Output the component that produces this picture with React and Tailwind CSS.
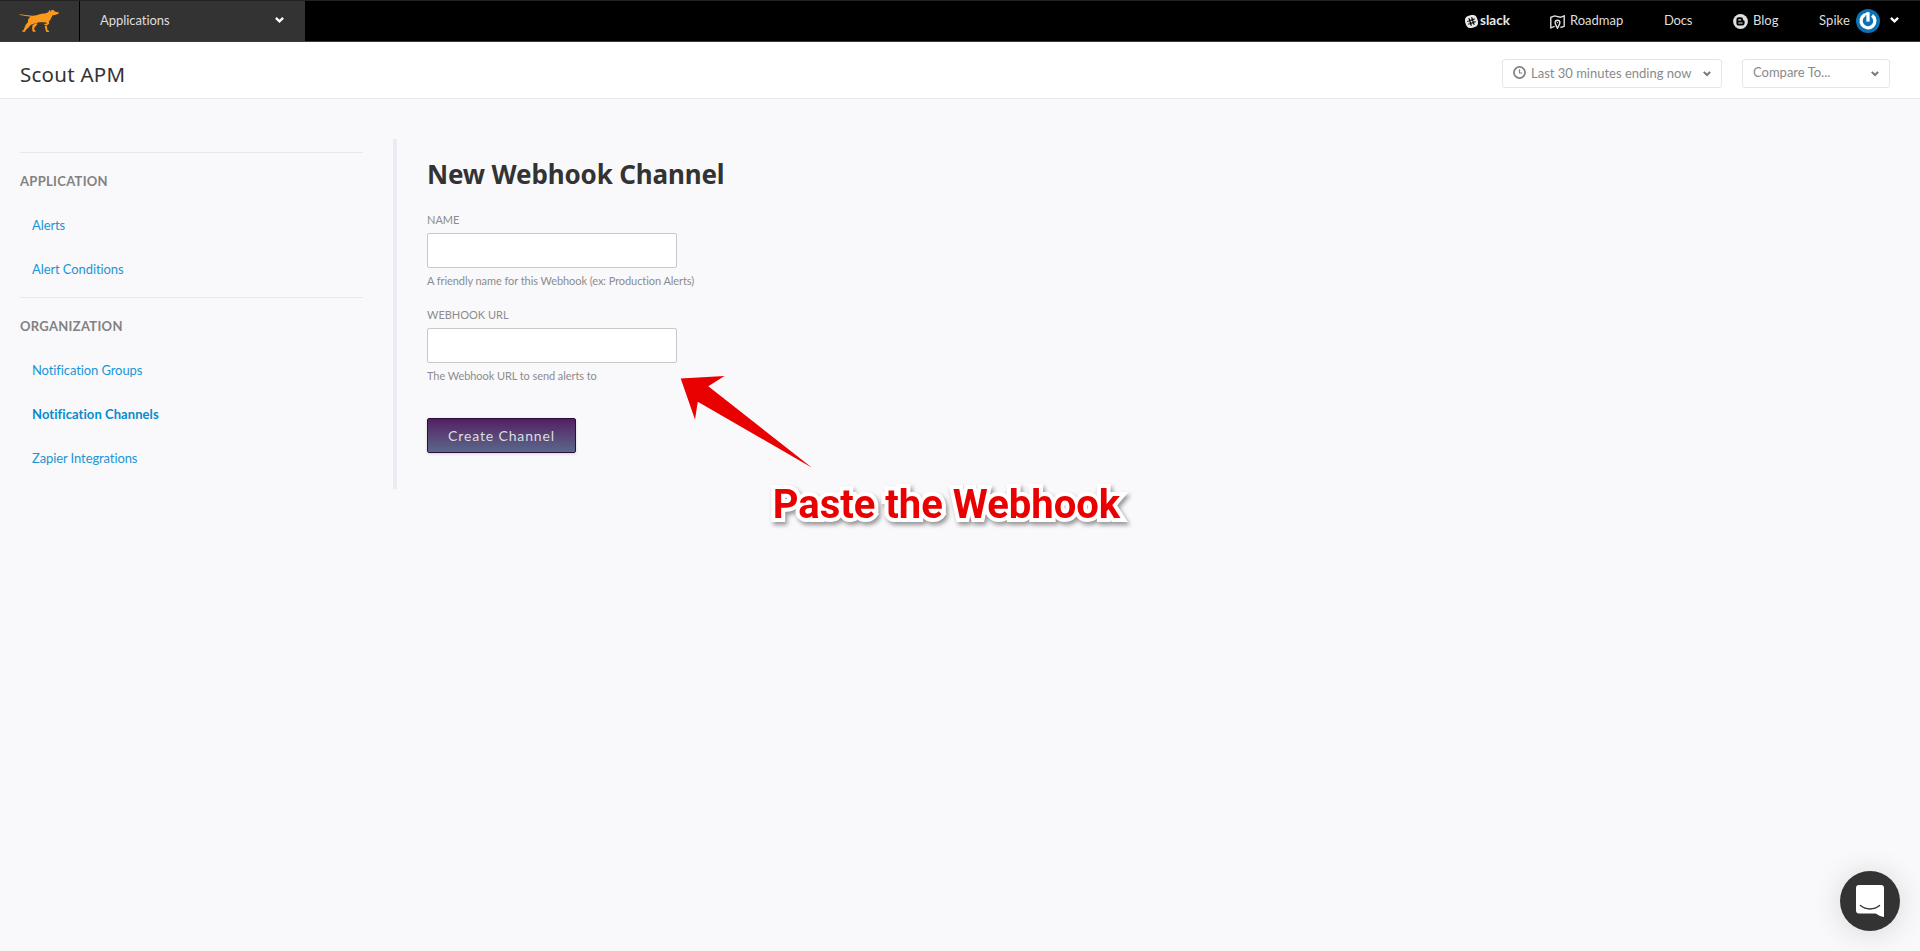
function Chevron({ className }) {
  return (
    <svg viewBox="0 0 9 6" className={className} fill="none" stroke="currentColor" strokeWidth="2.3">
      <path d="M0.9 0.9 L4.5 4.4 L8.1 0.9" />
    </svg>
  );
}

function DogLogo() {
  return (
    <svg viewBox="0 0 120 72" className="h-6 w-10" fill="#f8981d">
      <path d="M2 16 L40 20.5 C52 20 58 16.5 68 14.5 C78 13.5 84 12 88 9 L92 2.5 L95 8 L98 2 L104 4 L109 8.500 L119 9.500 L118.500 14.500 L108 18 L101 19 C98 25 95 33 89 38 L91 41 L90 44 L83 50 L76 47.500 L75.500 44.500 L82 44 L84 42 L78 40 C68 39 56 39 49 43 L36 47.500 L27 57 L20.500 63 L18 68.500 L9.500 68.500 L10 65 L14 62 L20 47 L27 39 C26 32 29 27 35 23.500 L2 18 Z" />
      <path d="M41 48 L53 42 L55 46 L46 56 L46 63 L50 65.500 L49.500 68.500 L42 68.500 L40 65 L39.500 55 Z" />
      <path d="M77 51 L84 51.500 L85 63 L90 66 L90 69 L82.500 69 L80.500 65 Z" />
    </svg>
  );
}

function SlackIcon() {
  return (
    <svg viewBox="0 0 24 24" className="h-[13px] w-[13px]">
      <rect x="0.500" y="0.500" width="23" height="23" rx="8.500" fill="#e8e8e8" transform="rotate(-18 12 12)" />
      <g transform="rotate(-18 12 12)" stroke="#000" strokeWidth="2.200" strokeLinecap="round">
        <path d="M9.300 5.500V18.500M14.700 5.500V18.500M5.500 9.300H18.500M5.500 14.700H18.500" />
      </g>
    </svg>
  );
}

function MapIcon() {
  return (
    <svg viewBox="0 0 15 14" className="h-[14px] w-[15px]" fill="none" stroke="#e0e0e0" strokeWidth="1.400">
      <path d="M4.600 11.300 L0.800 12.800 V2.300 L4.600 0.900 L10.300 2.300 L14.200 0.900 V11.300 L10.400 12.500" />
      <path d="M7.500 13.200 C6.600 11.200 5.100 9.400 5.100 7.600 A2.400 2.400 0 0 1 9.900 7.600 C9.900 9.400 8.400 11.200 7.500 13.200 Z" />
      <circle cx="7.500" cy="7.600" r="0.700" fill="#e0e0e0" stroke="none" />
    </svg>
  );
}

function BlogIcon() {
  return (
    <svg viewBox="0 0 15 15" className="h-[15px] w-[15px]">
      <circle cx="7.500" cy="7.500" r="7.400" fill="#e0e0e0" />
      <path
        d="M5.600 3.300 H7.900 A2.200 2.200 0 0 1 10.100 5.500 V5.900 C10.200 6.500 11.600 6.200 11.600 7.200 V9.300 A2.300 2.300 0 0 1 9.300 11.600 H5.600 A2.200 2.200 0 0 1 3.400 9.400 V5.500 A2.200 2.200 0 0 1 5.600 3.300 Z"
        fill="#000"
      />
      <path d="M5.700 5.900 H7.700 M5.700 9 H9.200" stroke="#e0e0e0" strokeWidth="1.100" strokeLinecap="round" />
    </svg>
  );
}

function Avatar() {
  return (
    <svg viewBox="0 0 24 24" className="h-6 w-6">
      <circle cx="12" cy="12" r="12" fill="#0a73b5" />
      <path d="M8.600 5.900 A6.900 6.900 0 1 0 16.100 6.400" fill="none" stroke="#fff" strokeWidth="3.300" />
      <path d="M7.600 4.800 L12 3.200 V5.600 L8.500 7 Z" fill="#fff" />
      <path d="M12 3.200 V12.600" stroke="#fff" strokeWidth="3.300" />
    </svg>
  );
}

function ClockIcon() {
  return (
    <svg viewBox="0 0 13 13" className="h-[13px] w-[13px]" fill="none" stroke="#828282">
      <circle cx="6.500" cy="6.500" r="5.600" strokeWidth="1.700" />
      <path d="M6.500 3.200 V7 H9.200" strokeWidth="1.200" />
    </svg>
  );
}

function TopBar() {
  return (
    <header className="flex h-[42px] border-t border-b border-t-[#222222] border-b-[#3a3a3a] bg-black text-[13px] leading-[39px] text-[#dedede]">
      <div className="flex w-[79px] bg-[#333333] pt-2 pl-[19px]">
        <DogLogo />
      </div>
      <div className="ml-px flex w-[225px] items-start justify-between bg-[#333333] pr-[21px] pl-5">
        <span className="tracking-[-0.05px]">Applications</span>
        <Chevron className="mt-4 h-[6px] w-[9px] text-white" />
      </div>
      <nav className="ml-auto flex items-start pr-[21px]">
        <a className="flex w-[85px] items-start">
          <span className="mt-[14px] mr-[2px]">
            <SlackIcon />
          </span>
          <span className="text-[13.500px] font-bold text-[#e8e8e8]">slack</span>
        </a>
        <a className="flex w-[114px] items-start">
          <span className="mt-[14px] mr-[5px]">
            <MapIcon />
          </span>
          Roadmap
        </a>
        <a className="w-[69px] tracking-[-0.200px]">Docs</a>
        <a className="flex w-[86px] items-start">
          <span className="mt-[13px] mr-[5px]">
            <BlogIcon />
          </span>
          Blog
        </a>
        <a className="flex items-start">
          <span className="w-[37px] tracking-[0.100px]">Spike</span>
          <span className="mt-2">
            <Avatar />
          </span>
          <Chevron className="mt-4 ml-[10px] h-[6px] w-[9px] text-white" />
        </a>
      </nav>
    </header>
  );
}

function TitleBar() {
  return (
    <div className="flex h-[57px] items-start justify-between border-b border-[#e9e9f1] bg-white pr-[30px] pl-5">
      <h1 className="pt-[15px] font-['Noto_Sans'] text-[20.500px] leading-[34px] tracking-[0.250px] text-[#333333]">
        Scout APM
      </h1>
      <div className="flex gap-5 pt-[17px] text-[13px] text-[#8a8a8a]">
        <button className="flex h-[29px] w-[220px] items-center rounded-[3px] border border-[#e5e5e5] pl-[10px]">
          <span className="mb-[2px]">
            <ClockIcon />
          </span>
          <span className="ml-[5px] w-[172px] text-left leading-[27px]">Last 30 minutes ending now</span>
          <Chevron className="mt-px h-[5.500px] w-2 text-[#777777]" />
        </button>
        <button className="flex h-[29px] w-[148px] items-center justify-between rounded-[3px] border border-[#e5e5e5] pr-[10px] pl-[10px]">
          <span className="mb-[2px]">Compare To...</span>
          <Chevron className="mt-px h-[5.500px] w-2 text-[#777777]" />
        </button>
      </div>
    </div>
  );
}

function SideGroup({ title, items, active }) {
  return (
    <section className="border-t border-[#e9e9e9] pt-[6px] text-[13px] leading-[44px]">
      <h3 className="font-bold tracking-[0.300px] text-[#828282]">{title}</h3>
      <ul className="pl-3 text-[#1a95d5]">
        {items.map((item) => (
          <li key={item} className={item === active ? "font-bold tracking-[0.070px] text-[#088bcd]" : "tracking-[-0.100px]"}>
            {item}
          </li>
        ))}
      </ul>
    </section>
  );
}

function Sidebar() {
  return (
    <aside className="flex w-[343px] flex-col gap-[6px] pt-[13px]">
      <SideGroup title="APPLICATION" items={["Alerts", "Alert Conditions"]} />
      <SideGroup
        title="ORGANIZATION"
        items={["Notification Groups", "Notification Channels", "Zapier Integrations"]}
        active="Notification Channels"
      />
    </aside>
  );
}

function Field({ label, hint }) {
  return (
    <div className="h-[95px] text-[11px] leading-4 text-[#8c8c8c]">
      <label className="block">{label}</label>
      <input className="mt-[5px] block h-[35px] w-[250px] rounded-[2px] border border-[#c8c8c8] bg-white px-2" />
      <p className="mt-[5px] whitespace-nowrap tracking-[-0.070px]">{hint}</p>
    </div>
  );
}

function Callout() {
  return (
    <div className="pointer-events-none absolute top-[376px] left-[680px]">
      <svg viewBox="0 0 132 92" className="h-[92px] w-[132px]">
        <polygon points="0.700,2.500 44.500,0 28.300,10.200 132,91.700 17.800,25.700 15,43.500" fill="#e90000" />
      </svg>
      <svg viewBox="0 0 370 60" className="mt-[6px] ml-[84px] h-[60px] w-[370px] overflow-visible drop-shadow-[2px_3px_2px_rgba(0,0,0,0.4)]">
        <text
          x="8.700"
          y="44"
          className="fill-[#e90000] stroke-white stroke-[8px] font-['Roboto'] text-[40px] font-bold [paint-order:stroke]"
          strokeLinejoin="miter"
          strokeMiterlimit="3"
        >
          Paste the Webhook
        </text>
      </svg>
    </div>
  );
}

function ChatLauncher() {
  return (
    <div className="absolute top-[871px] left-[1840px] flex h-[60px] w-[60px] items-center justify-center rounded-full bg-[#333333] shadow-[0_2px_30px_rgba(0,0,0,0.14)]">
      <svg viewBox="0 0 28 32" className="h-8 w-7">
        <path d="M3 0 H25 A3 3 0 0 1 28 3 V32 C25 31.500 22 30 19.500 28.500 H3 A3 3 0 0 1 0 25.500 V3 A3 3 0 0 1 3 0 Z" fill="#fff" />
        <path d="M4.500 20.500 C10 25 18 25 23.500 20.500" fill="none" stroke="#333333" strokeWidth="1.500" strokeLinecap="round" />
      </svg>
    </div>
  );
}

export default function App() {
  return (
    <div className="relative h-[951px] w-[1920px] overflow-hidden bg-[#f9f9fb] font-['Lato',sans-serif]">
      <TopBar />
      <TitleBar />
      <div className="flex pt-10 pl-5">
        <Sidebar />
        <main className="ml-[30px] h-[350px] border-l-4 border-[#ebebf3] pl-[30px]">
          <h2 className="pt-[17px] pb-5 font-['Noto_Sans'] text-[26px] leading-[36px] font-bold tracking-[-0.150px] text-[#333333]">
            New Webhook Channel
          </h2>
          <Field label="NAME" hint="A friendly name for this Webhook (ex: Production Alerts)" />
          <Field label="WEBHOOK URL" hint="The Webhook URL to send alerts to" />
          <button className="mt-4 block h-[35px] w-[149px] rounded-[2px] border border-[#2a1038] bg-linear-to-b from-[#521d65] to-[#58688a] text-[14px] leading-[33px] tracking-[0.860px] text-[#dddddd] shadow-[0_1px_3px_rgba(0,0,0,0.15)]">
            Create Channel
          </button>
        </main>
      </div>
      <Callout />
      <ChatLauncher />
    </div>
  );
}
